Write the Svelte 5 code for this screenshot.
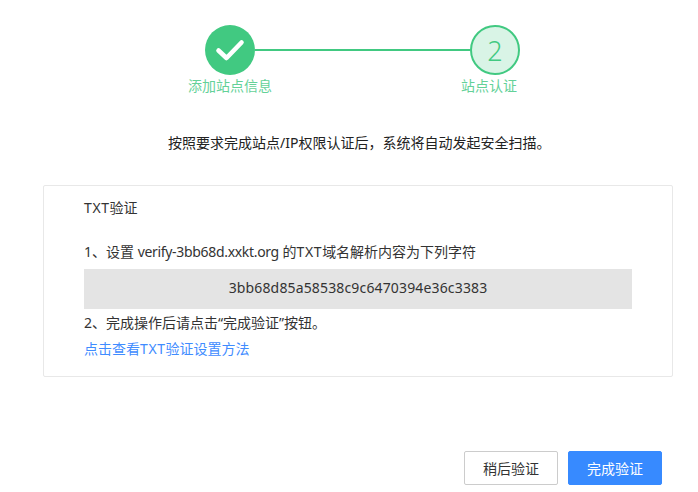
<script lang="ts">
	let domain = $state('verify-3bb68d.xxkt.org');
	let token = $state('3bb68d85a58538c9c6470394e36c3383');
</script>

<div class="page">
	<div class="steps">
		<div class="step">
			<div class="step__circle step__circle--done">
				<svg width="30" height="24" viewBox="0 0 30 24" fill="none">
					<path d="M3.5 12.5 L11.5 20 L26.5 4.5" stroke="#fff" stroke-width="4.6" stroke-linecap="round" stroke-linejoin="round" />
				</svg>
			</div>
			<span class="step__label">添加站点信息</span>
		</div>
		<div class="steps__line"></div>
		<div class="step">
			<div class="step__circle step__circle--active">2</div>
			<span class="step__label step__label--last">站点认证</span>
		</div>
	</div>

	<p class="notice">按照要求完成站点/IP权限认证后，系统将自动发起安全扫描。</p>

	<div class="card">
		<h3 class="card__title"><span class="txt">TXT</span>验证</h3>
		<p class="card__line">1、设置 <span class="domain">{domain}</span> 的<span class="txt">TXT</span>域名解析内容为下列字符</p>
		<div class="token">{token}</div>
		<p class="card__line card__line--second">2、完成操作后请点击“完成验证”按钮。</p>
		<a class="card__link" href="#help">点击查看<span class="txt">TXT</span>验证设置方法</a>
	</div>

	<div class="actions">
		<button class="btn">稍后验证</button>
		<button class="btn btn--primary">完成验证</button>
	</div>
</div>

<style>
	:global(body) { margin: 0; background: #fff; }

	.page { width: 698px; height: 492px; box-sizing: border-box; padding: 25px 25px 0 43px; font-family: "Noto Sans", "Noto Sans CJK SC", sans-serif; font-size: 14px; color: #333; }

	.steps { display: flex; align-items: flex-start; margin-left: 162px; width: 315px; }
	.steps__line { flex: 1; height: 2px; margin-top: 24px; background: #41c981; }
	.step { width: 50px; display: flex; flex-direction: column; align-items: center; }
	.step__circle { width: 50px; height: 50px; box-sizing: border-box; border-radius: 50%; display: flex; align-items: center; justify-content: center; }
	.step__circle--done { background: #41c981; }
	.step__circle--active { background: #d9f4e6; border: 2px solid #41c981; color: #41c981; font-size: 27px; font-weight: 300; }
	.step__label { margin-top: 2px; font-size: 14px; line-height: 18px; color: #64d198; white-space: nowrap; }
	.step__label--last { margin-right: 12px; }

	.notice { margin: 38px 0 0 125px; line-height: 20px; color: #222; white-space: nowrap; }

	.card { margin-top: 32px; width: 630px; height: 192px; box-sizing: border-box; padding: 12px 40px 0; border: 1px solid #e8e8e8; border-radius: 2px; }
	.card__title { margin: 0; font-size: 14px; font-weight: 400; line-height: 20px; }
	.card__line { margin: 24px 0 0; line-height: 20px; white-space: nowrap; }
	.card__line--second { margin-top: 4px; }
	.domain { letter-spacing: -0.32px; }
	.txt { letter-spacing: 0.6px; }
	.token { margin-top: 7px; width: 548px; height: 40px; line-height: 38px; background: #e4e4e4; text-align: center; letter-spacing: 0.15px; }
	.card__link { display: block; margin-top: 6px; line-height: 20px; color: #3f8cff; text-decoration: none; }

	.actions { display: flex; justify-content: flex-end; gap: 10px; margin-top: 74px; padding-right: 11px; }
	.btn { width: 94px; height: 34px; padding: 0; border: 1px solid #ccc; border-radius: 2px; background: #fff; font: inherit; color: #333; }
	.btn--primary { background: #378aff; border-color: #378aff; color: #fff; }
</style>
